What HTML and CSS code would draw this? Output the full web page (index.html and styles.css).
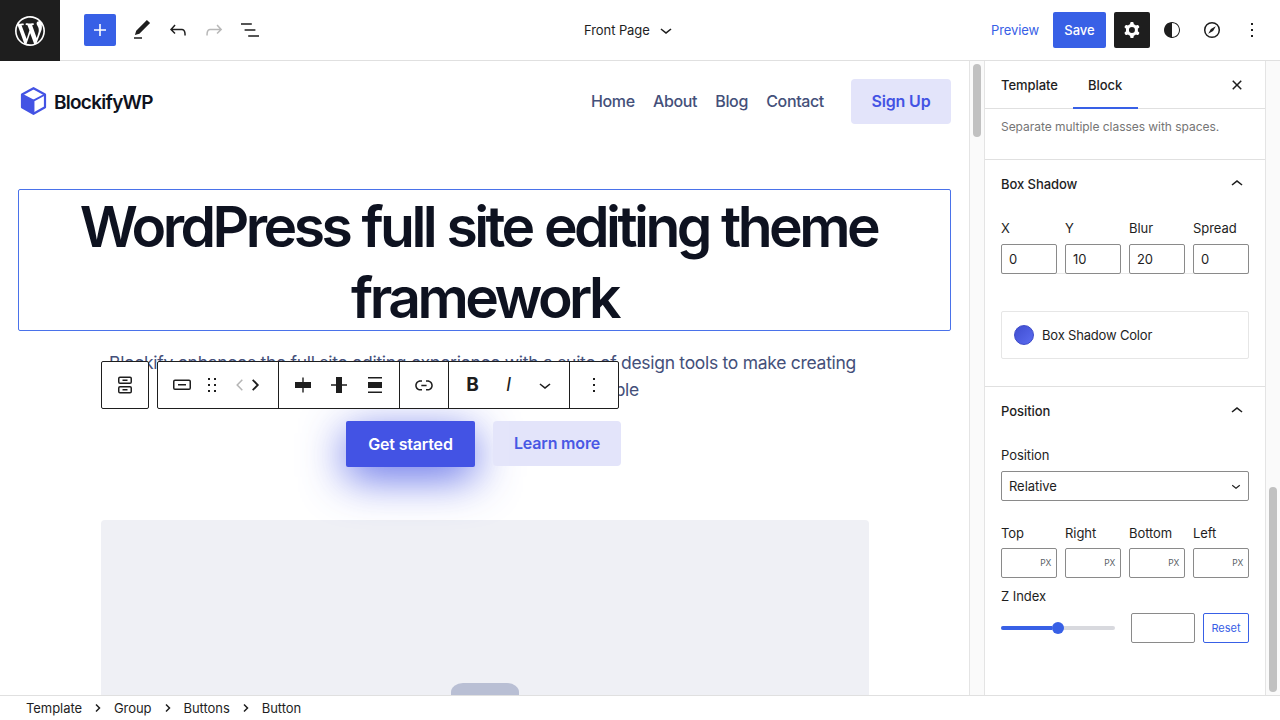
FILE: index.html
```html
<!DOCTYPE html>
<html lang="en">
<head>
<meta charset="utf-8">
<title>Front Page – Editor</title>
<link rel="stylesheet" href="styles.css">
</head>
<body>
<div class="editor">
  <header class="topbar">
    <div class="wp-logo"><svg width="36" height="36" viewBox="-2 -2 24 24"><path d="M20 10c0-5.51-4.49-10-10-10C4.48 0 0 4.49 0 10c0 5.52 4.48 10 10 10 5.51 0 10-4.48 10-10zM7.78 15.37L4.37 6.22c.55-.02 1.17-.08 1.17-.08.5-.06.44-1.13-.06-1.11 0 0-1.45.11-2.37.11-.18 0-.37 0-.58-.01C4.12 2.69 6.87 1.11 10 1.11c2.33 0 4.45.87 6.05 2.34-.68-.11-1.65.39-1.65 1.58 0 .74.45 1.36.9 2.1.35.61.55 1.36.55 2.46 0 1.49-1.4 5-1.4 5l-3.03-8.37c.54-.02.82-.17.82-.17.5-.05.44-1.25-.06-1.22 0 0-1.44.12-2.38.12-.87 0-2.33-.12-2.33-.12-.5-.03-.56 1.2-.06 1.22l.92.08 1.26 3.41zM17.41 10c.24-.64.74-1.87.43-4.25.7 1.29 1.05 2.71 1.05 4.25 0 3.29-1.73 6.24-4.4 7.78.97-2.59 1.94-5.2 2.92-7.78zM6.1 18.09C3.12 16.65 1.11 13.53 1.11 10c0-1.3.23-2.48.72-3.59C3.25 10.3 4.67 14.2 6.1 18.09zm4.03-6.63l2.58 6.98c-.86.29-1.76.45-2.71.45-.79 0-1.57-.11-2.29-.33.81-2.38 1.62-4.74 2.42-7.1z"/></svg></div>
    <div class="tools">
      <button class="inserter"><svg viewBox="0 0 24 24"><path d="M18 11.2h-5.2V6h-1.6v5.2H6v1.6h5.2V18h1.6v-5.2H18z"/></svg></button>
      <button class="tool"><svg viewBox="0 0 24 24"><path d="M20.1 5.1L16.9 2 6.2 12.7l-1.3 4.4 4.5-1.3L20.1 5.1zM4 20.8h8v-1.5H4v1.5z"/></svg></button>
      <button class="tool"><svg viewBox="0 0 24 24"><path d="M18.3 11.7c-.6-.6-1.4-.9-2.3-.9H6.7l2.9-3.3-1.1-1-4.5 5L8.5 16l1-1-2.7-2.7H16c.5 0 .9.2 1.3.5 1 1 1 3.4 1 4.5v.3h1.5v-.2c0-1.5 0-4.3-1.5-5.7z"/></svg></button>
      <button class="tool disabled"><svg viewBox="0 0 24 24"><path d="M15.6 6.5l-1.1 1 2.9 3.3H8c-.9 0-1.7.3-2.3.9-1.4 1.5-1.4 4.2-1.4 5.6v.2h1.5v-.3c0-1.1 0-3.5 1-4.5.3-.3.7-.5 1.3-.5h9.2L14.5 15l1.1 1.1 4.6-4.6-4.6-5z"/></svg></button>
      <button class="tool"><svg viewBox="0 0 24 24"><path d="M13.8 5.2H3v1.5h10.8V5.2zm-3.6 12v1.5H21v-1.5H10.2zm7.2-6H6.6v1.5h10.8v-1.5z"/></svg></button>
    </div>
    <div class="doc-title"><span>Front Page</span><svg viewBox="0 0 24 24"><path d="M17.5 11.6L12 16l-5.5-4.4.9-1.2L12 14l4.5-3.6 1 1.2z"/></svg></div>
    <div class="actions">
      <span class="preview">Preview</span>
      <button class="save">Save</button>
      <button class="action active"><svg viewBox="0 0 24 24"><path fill-rule="evenodd" d="M10.289 4.836A1 1 0 0111.275 4h1.306a1 1 0 01.987.836l.244 1.466c.787.26 1.503.679 2.108 1.218l1.393-.522a1 1 0 011.216.437l.653 1.13a1 1 0 01-.23 1.273l-1.148.944a6.025 6.025 0 010 2.435l1.149.946a1 1 0 01.23 1.272l-.653 1.13a1 1 0 01-1.216.437l-1.394-.522c-.605.54-1.32.958-2.108 1.218l-.244 1.466a1 1 0 01-.987.836h-1.306a1 1 0 01-.986-.836l-.244-1.466a5.995 5.995 0 01-2.108-1.218l-1.394.522a1 1 0 01-1.217-.436l-.653-1.131a1 1 0 01.23-1.272l1.149-.946a6.026 6.026 0 010-2.435l-1.148-.944a1 1 0 01-.23-1.272l.653-1.131a1 1 0 011.217-.437l1.393.522a5.994 5.994 0 012.108-1.218l.244-1.466zM14.929 12a3 3 0 11-6 0 3 3 0 016 0z"/></svg></button>
      <button class="action"><svg viewBox="0 0 24 24"><path d="M12 4c-4.4 0-8 3.6-8 8v.1c0 4.1 3.2 7.5 7.2 7.9h.8c4.4 0 8-3.6 8-8s-3.6-8-8-8zm0 15V5c3.9 0 7 3.1 7 7s-3.1 7-7 7z"/></svg></button>
      <button class="action"><svg viewBox="0 0 24 24"><circle cx="12" cy="12" r="7.3" fill="none" stroke="#1e1e1e" stroke-width="1.5"/><path d="M15.8 8.2l-2.700 4.900-4.900 2.700 2.700-4.900z"/></svg></button>
      <button class="action"><svg viewBox="0 0 24 24"><path d="M13 19h-2v-2h2v2zm0-6h-2v-2h2v2zm0-6h-2V5h2v2z"/></svg></button>
    </div>
  </header>

  <div class="workspace">
    <main class="canvas">
      <div class="site-header">
        <div class="brand">
          <svg width="28" height="30" viewBox="0 0 28 30"><path d="M14.500 2.200L26 8.500v12.800L14.500 27.800 3 21.300V8.500z" fill="#fff" stroke="#4353e4" stroke-width="2.200" stroke-linejoin="round"/><path d="M3 8.800l11.500 6v13L3 21.300z" fill="#4353e4"/><path d="M3 8.500l11.500 6.200L26 8.500M14.500 14.500v13" fill="none" stroke="#4353e4" stroke-width="1.900"/></svg>
          <span>BlockifyWP</span>
        </div>
        <nav class="nav"><a>Home</a><a>About</a><a>Blog</a><a>Contact</a></nav>
        <a class="btn soft signup">Sign Up</a>
      </div>
      <h1 class="headline"><span class="line first">WordPress full site editing theme</span><span class="line second">framework</span></h1>
      <p class="lede"><span class="line">Blockify enhances the full site editing experience with a suite of design tools to make creating</span><span class="line last">beautiful WordPress websites possible</span></p>
      <div class="cta"><a class="btn solid">Get started</a><a class="btn soft learn">Learn more</a></div>
      <div class="media"><div class="media-shape"></div></div>

      <div class="block-toolbar">
        <div class="parent-box"><svg viewBox="0 0 24 24"><path fill-rule="evenodd" d="M14.5 17.5h-5V16h5v1.5zM14.5 8h-5V6.5h5V8zM7 3.5h10a2 2 0 0 1 2 2V9a2 2 0 0 1-2 2H7a2 2 0 0 1-2-2V5.500a2 2 0 0 1 2-2zM17 5H7a.5.5 0 0 0-.5.5V9a.5.5 0 0 0 .5.5h10a.5.5 0 0 0 .5-.5V5.500a.5.5 0 0 0-.5-.5zM7 13h10a2 2 0 0 1 2 2v3.500a2 2 0 0 1-2 2H7a2 2 0 0 1-2-2V15a2 2 0 0 1 2-2zm10 1.500H7a.5.5 0 0 0-.5.5v3.500a.5.5 0 0 0 .5.5h10a.5.5 0 0 0 .5-.5V15a.5.5 0 0 0-.5-.5z"/></svg></div>
        <div class="main-box">
          <div class="group g-block">
            <svg viewBox="0 0 24 24"><path fill-rule="evenodd" d="M8 12.500h8V11H8v1.500zM19 6.500H5a2 2 0 0 0-2 2V15a2 2 0 0 0 2 2h14a2 2 0 0 0 2-2V8.500a2 2 0 0 0-2-2zM5 8h14a.5.5 0 0 1 .5.5V15a.5.5 0 0 1-.5.5H5a.5.5 0 0 1-.5-.5V8.500A.5.5 0 0 1 5 8z"/></svg>
            <svg class="drag" viewBox="0 0 24 24"><path d="M8 7h2V5H8v2zm0 6h2v-2H8v2zm0 6h2v-2H8v2zm6-14v2h2V5h-2zm0 8h2v-2h-2v2zm0 6h2v-2h-2v2z"/></svg>
            <svg class="mover left" viewBox="0 0 12 24"><path d="M8.300 6.800L3.200 12l5.100 5.200" fill="none" stroke="#b5b5b5" stroke-width="1.500"/></svg>
            <svg class="mover" viewBox="0 0 12 24"><path d="M3.700 6.800L8.800 12l-5.100 5.200" fill="none" stroke="#1e1e1e" stroke-width="1.800"/></svg>
          </div>
          <div class="group g-align">
            <svg viewBox="0 0 24 24"><path d="M4 9h7.300V4.500h1.400V9H20v6h-7.300v4.500h-1.400V15H4z"/></svg>
            <svg viewBox="0 0 24 24"><path d="M9 4h6v7.300h5v1.400h-5V20H9v-7.300H4v-1.400h5z"/></svg>
            <svg viewBox="0 0 24 24"><path d="M5 4h14v1.500H5zM5 9h14v6H5zM5 18.500h14V20H5z"/></svg>
          </div>
          <div class="group g-link"><svg viewBox="0 0 24 24"><path d="M15.600 7.200H14v1.500h1.600c2 0 3.700 1.700 3.700 3.700s-1.700 3.700-3.700 3.700H14v1.500h1.600c2.800 0 5.200-2.300 5.200-5.200 0-2.900-2.300-5.200-5.200-5.200zM4.700 12.400c0-2 1.700-3.700 3.700-3.700H10V7.200H8.400c-2.900 0-5.200 2.300-5.200 5.200 0 2.900 2.300 5.200 5.200 5.200H10v-1.500H8.400c-2 0-3.700-1.700-3.700-3.700zm4.600.9h5.300v-1.500H9.300v1.500z"/></svg></div>
          <div class="group g-format"><b class="fmt">B</b><i class="fmt italic">I</i><svg viewBox="0 0 24 24"><path d="M17.500 11.600L12 16l-5.500-4.400.9-1.200L12 14l4.500-3.600 1 1.200z"/></svg></div>
          <div class="group g-more"><svg viewBox="0 0 24 24"><path d="M13 19h-2v-2h2v2zm0-6h-2v-2h2v2zm0-6h-2V5h2v2z"/></svg></div>
        </div>
      </div>
    </main>
    <div class="scroll canvas-scroll"><div class="thumb"></div></div>

    <aside class="sidebar">
      <div class="tabs"><span class="tab">Template</span><span class="tab current">Block</span><svg viewBox="0 0 24 24"><path d="M12 13.060l3.712 3.713 1.061-1.060L13.061 12l3.712-3.712-1.060-1.060L12 10.938 8.288 7.227l-1.061 1.060L10.939 12l-3.712 3.712 1.060 1.061L12 13.061z"/></svg></div>
      <div class="help">Separate multiple classes with spaces.</div>
      <section class="panel shadow-panel">
        <div class="panel-title"><span>Box Shadow</span><svg viewBox="0 0 24 24"><path d="M6.500 12.400L12 8l5.500 4.400-.9 1.200L12 10l-4.500 3.600-1-1.200z"/></svg></div>
        <div class="fields underlined">
          <label class="field"><span>X</span><span class="input">0</span></label>
          <label class="field"><span>Y</span><span class="input">10</span></label>
          <label class="field"><span>Blur</span><span class="input">20</span></label>
          <label class="field"><span>Spread</span><span class="input">0</span></label>
        </div>
        <div class="color-row"><span class="swatch"></span><span>Box Shadow Color</span></div>
      </section>
      <section class="panel position-panel">
        <div class="panel-title"><span>Position</span><svg viewBox="0 0 24 24"><path d="M6.500 12.400L12 8l5.500 4.400-.9 1.200L12 10l-4.500 3.600-1-1.200z"/></svg></div>
        <div class="select-label">Position</div>
        <div class="select"><span>Relative</span><svg viewBox="0 0 24 24"><path d="M17.500 11.600L12 16l-5.500-4.400.9-1.200L12 14l4.500-3.600 1 1.200z"/></svg></div>
        <div class="fields offsets">
          <label class="field"><span>Top</span><span class="input unit">PX</span></label>
          <label class="field"><span>Right</span><span class="input unit">PX</span></label>
          <label class="field"><span>Bottom</span><span class="input unit">PX</span></label>
          <label class="field"><span>Left</span><span class="input unit">PX</span></label>
        </div>
        <div class="z-label">Z Index</div>
        <div class="z-row"><div class="range"><div class="range-fill"></div><div class="range-knob"></div></div><span class="input z-input"></span><button class="reset">Reset</button></div>
      </section>
    </aside>
    <div class="scroll side-scroll"><div class="thumb"></div></div>
  </div>

  <footer class="crumbs">
    <span>Template</span><svg viewBox="0 0 8 10"><path d="M2 1.500L5.500 5 2 8.500"/></svg><span>Group</span><svg viewBox="0 0 8 10"><path d="M2 1.500L5.500 5 2 8.500"/></svg><span>Buttons</span><svg viewBox="0 0 8 10"><path d="M2 1.500L5.500 5 2 8.500"/></svg><span>Button</span>
  </footer>
</div>
</body>
</html>
```

FILE: styles.css
```css
* { box-sizing: border-box; }
body { margin: 0; background: #fff; color: #1e1e1e; font: 13px/16px Inter, "Liberation Sans", sans-serif; letter-spacing: -.06px; }
svg { display: block; width: 24px; height: 24px; fill: #1e1e1e; flex: none; }
button { border: 0; padding: 0; background: none; font: inherit; color: inherit; display: flex; align-items: center; justify-content: center; flex: none; }
.editor { width: 1280px; height: 720px; display: flex; flex-direction: column; overflow: hidden; }

.topbar { height: 61px; flex: none; display: flex; align-items: center; border-bottom: 1px solid #e0e0e0; }
.wp-logo { width: 60px; height: 61px; background: #1e1e1e; display: flex; align-items: center; justify-content: center; align-self: flex-start; flex: none; }
.wp-logo svg { width: 36px; height: 36px; fill: #fff; }
.tools { display: flex; align-items: center; gap: 4px; padding-left: 24px; width: 524px; }
.inserter { width: 32px; height: 32px; background: #3860e6; border-radius: 2px; margin-right: 8px; }
.inserter svg { fill: #fff; }
.tool { width: 32px; height: 32px; }
.tool.disabled svg { fill: #b8b8b8; }
.inserter + .tool { margin-left: -2px; }
.doc-title { display: flex; align-items: center; gap: 4px; width: 407px; letter-spacing: -.08px; }
.actions { display: flex; align-items: center; }
.preview { color: #3860e6; width: 62px; letter-spacing: -.1px; }
.save { width: 53px; height: 36px; background: #3860e6; color: #fff; border-radius: 2px; margin-right: 8px; font-weight: 500; }
.action { width: 36px; height: 36px; margin-right: 4px; border-radius: 2px; }
.action.active { background: #1e1e1e; }
.action.active svg { fill: #fff; }

.workspace { flex: 1; min-height: 0; display: flex; }
.canvas { width: 969px; flex: none; position: relative; overflow: hidden; padding: 18px; color: #0e1220; }
.site-header { height: 45px; display: flex; align-items: center; }
.brand { display: flex; align-items: center; gap: 7px; width: 573px; font-size: 19px; font-weight: 600; letter-spacing: -.74px; padding-left: 1px; }
.brand svg { width: 28px; height: 30px; margin: -2px 0 0; }
.brand span { padding-top: 2px; }
.nav { display: flex; color: #44507a; font-size: 16px; font-weight: 500; width: 260px; gap: 18.300px; letter-spacing: -.38px; }
.btn { display: flex; align-items: center; justify-content: center; border-radius: 4px; font-size: 16px; font-weight: 600; letter-spacing: -.18px; padding-bottom: 1px; }
.btn.soft { background: #e3e4fa; color: #4353e4; }
.signup { width: 100px; height: 45px; }
.nav { padding-bottom: 1px; }
.headline { margin: 65px 0 0; height: 142px; border: 1px solid #4a72ea; border-radius: 2px; font-size: 57px; line-height: 70.500px; font-weight: 600; letter-spacing: -3.560px; word-spacing: 1.500px; text-align: center; }
.line { display: block; white-space: nowrap; }
.headline .first { margin: 2px 12px 0 0; }
.lede { margin: 18px 0 0; font-size: 17.500px; line-height: 27px; color: #44507a; text-align: center; letter-spacing: -.285px; padding-right: 4px; }
.lede .last { padding-left: 4px; }
.cta { display: flex; justify-content: center; gap: 18px; margin-top: 18px; padding-right: 2px; }
.btn.solid { width: 129px; height: 46px; background: #4353e4; color: #fff; border-radius: 2px; box-shadow: 0 11px 44px rgba(67, 83, 228, .85); }
.learn { width: 128px; height: 45px; opacity: .97; }
.media { width: 768px; height: 400px; margin: 53px 0 0 82.500px; background: #eff0f5; border-radius: 4px; padding-top: 163px; }
.media-shape { width: 68px; height: 68px; margin: 0 auto; background: #b9bfd4; border-radius: 12px 12px 0 0 / 9px 9px 0 0; }

.block-toolbar { position: absolute; left: 100.500px; top: 300px; display: flex; gap: 8px; }
.parent-box, .main-box { height: 48px; border: 1px solid #1e1e1e; border-radius: 2px; background: #fff; display: flex; align-items: center; }
.parent-box { width: 48px; justify-content: center; }
.main-box { width: 462px; }
.group { display: flex; align-items: center; justify-content: center; height: 46px; border-right: 1px solid #1e1e1e; flex: none; }
.group:last-child { border-right: 0; }
.g-block { width: 121px; justify-content: flex-start; padding-left: 12px; }
.drag { margin-left: 6px; }
.g-block .mover { width: 12px; margin-left: 3px; }
.g-block .left { margin-left: 10px; }
.g-align { width: 121px; gap: 12px; }
.g-link { width: 49px; }
.g-format { width: 121px; gap: 12px; }
.g-more { width: 48px; }
.fmt { width: 24px; text-align: center; font: 700 19px/24px Inter, sans-serif; color: #1e1e1e; }
.italic { font-weight: 400; font-style: italic; }

.scroll { width: 16px; background: #fafafa; border: solid #e4e4e4; border-width: 0 1px; padding-left: 3px; flex: none; }
.thumb { width: 8px; border-radius: 4px; background: #c1c1c1; }
.canvas-scroll .thumb { height: 73px; margin-top: 3px; }
.side-scroll { width: 15px; border-right: 0; }
.side-scroll .thumb { height: 205px; margin-top: 426px; }
.sidebar { width: 280px; flex: none; }
.tabs { height: 48px; display: flex; border-bottom: 1px solid #e0e0e0; font-weight: 500; align-items: stretch; }
.tab { width: 88px; padding: 16px 0 0 16px; }
.tab.current { width: 65px; padding-left: 15px; border-bottom: 2px solid #3860e6; margin-bottom: -1px; }
.tabs svg { margin: 12px 0 0 87px; }
.help { height: 50px; padding: 10px 16px 0; font-size: 12px; color: #757575; white-space: nowrap; letter-spacing: -.04px; }
.panel { border-top: 1px solid #e0e0e0; padding: 0 16px; }
.shadow-panel { height: 227px; }
.panel-title { display: flex; justify-content: space-between; align-items: center; height: 48px; font-weight: 500; }
.fields { display: flex; gap: 8px; margin-top: 12px; }
.underlined { box-shadow: 0 -1px 0 #e8e8e8 inset; }
.field { width: 56px; display: flex; flex-direction: column; gap: 8px; }
.input { display: flex; align-items: center; height: 30px; border: 1px solid #8a8a8a; border-radius: 2px; padding: 0 7px; background: #fff; }
.color-row { height: 48px; margin-top: 37px; border: 1px solid #e6e6e6; border-radius: 2px; display: flex; align-items: center; gap: 8px; padding-left: 12px; letter-spacing: -.18px; }
.swatch { width: 20px; height: 20px; border-radius: 50%; background: linear-gradient(135deg, #3f4dd0, #5b6cf0); border: 1px solid #3c4ac8; }
.select-label { margin-top: 12px; }
.select { height: 30px; margin-top: 8px; border: 1px solid #8a8a8a; border-radius: 2px; display: flex; align-items: center; justify-content: space-between; padding: 0 3px 0 7px; }
.select svg { width: 18px; height: 18px; }
.offsets { margin-top: 24px; }
.offsets .field { gap: 7px; }
.unit { justify-content: flex-end; font-size: 8.500px; letter-spacing: -.3px; color: #5a5f66; padding-right: 5px; }
.z-label { margin-top: 10px; }
.z-row { display: flex; align-items: center; margin-top: 9px; }
.range { width: 114px; height: 4px; border-radius: 2px; background: #d8d9de; display: flex; align-items: center; }
.range-fill { width: 51px; height: 4px; border-radius: 2px 0 0 2px; background: #3860e6; }
.range-knob { width: 12px; height: 12px; border-radius: 50%; background: #3860e6; flex: none; }
.z-input { width: 64px; margin: 0 8px 0 16px; }
.reset { width: 46px; height: 30px; border: 1px solid #3860e6; border-radius: 2px; color: #3860e6; font-size: 11px; }

.crumbs { height: 25px; flex: none; border-top: 1px solid #e0e0e0; display: flex; align-items: center; padding: 0 26px; letter-spacing: -.06px; }
.crumbs svg { width: 8px; height: 10px; fill: none; stroke: #1e1e1e; stroke-width: 1.500; margin: 0 12px; }
```
